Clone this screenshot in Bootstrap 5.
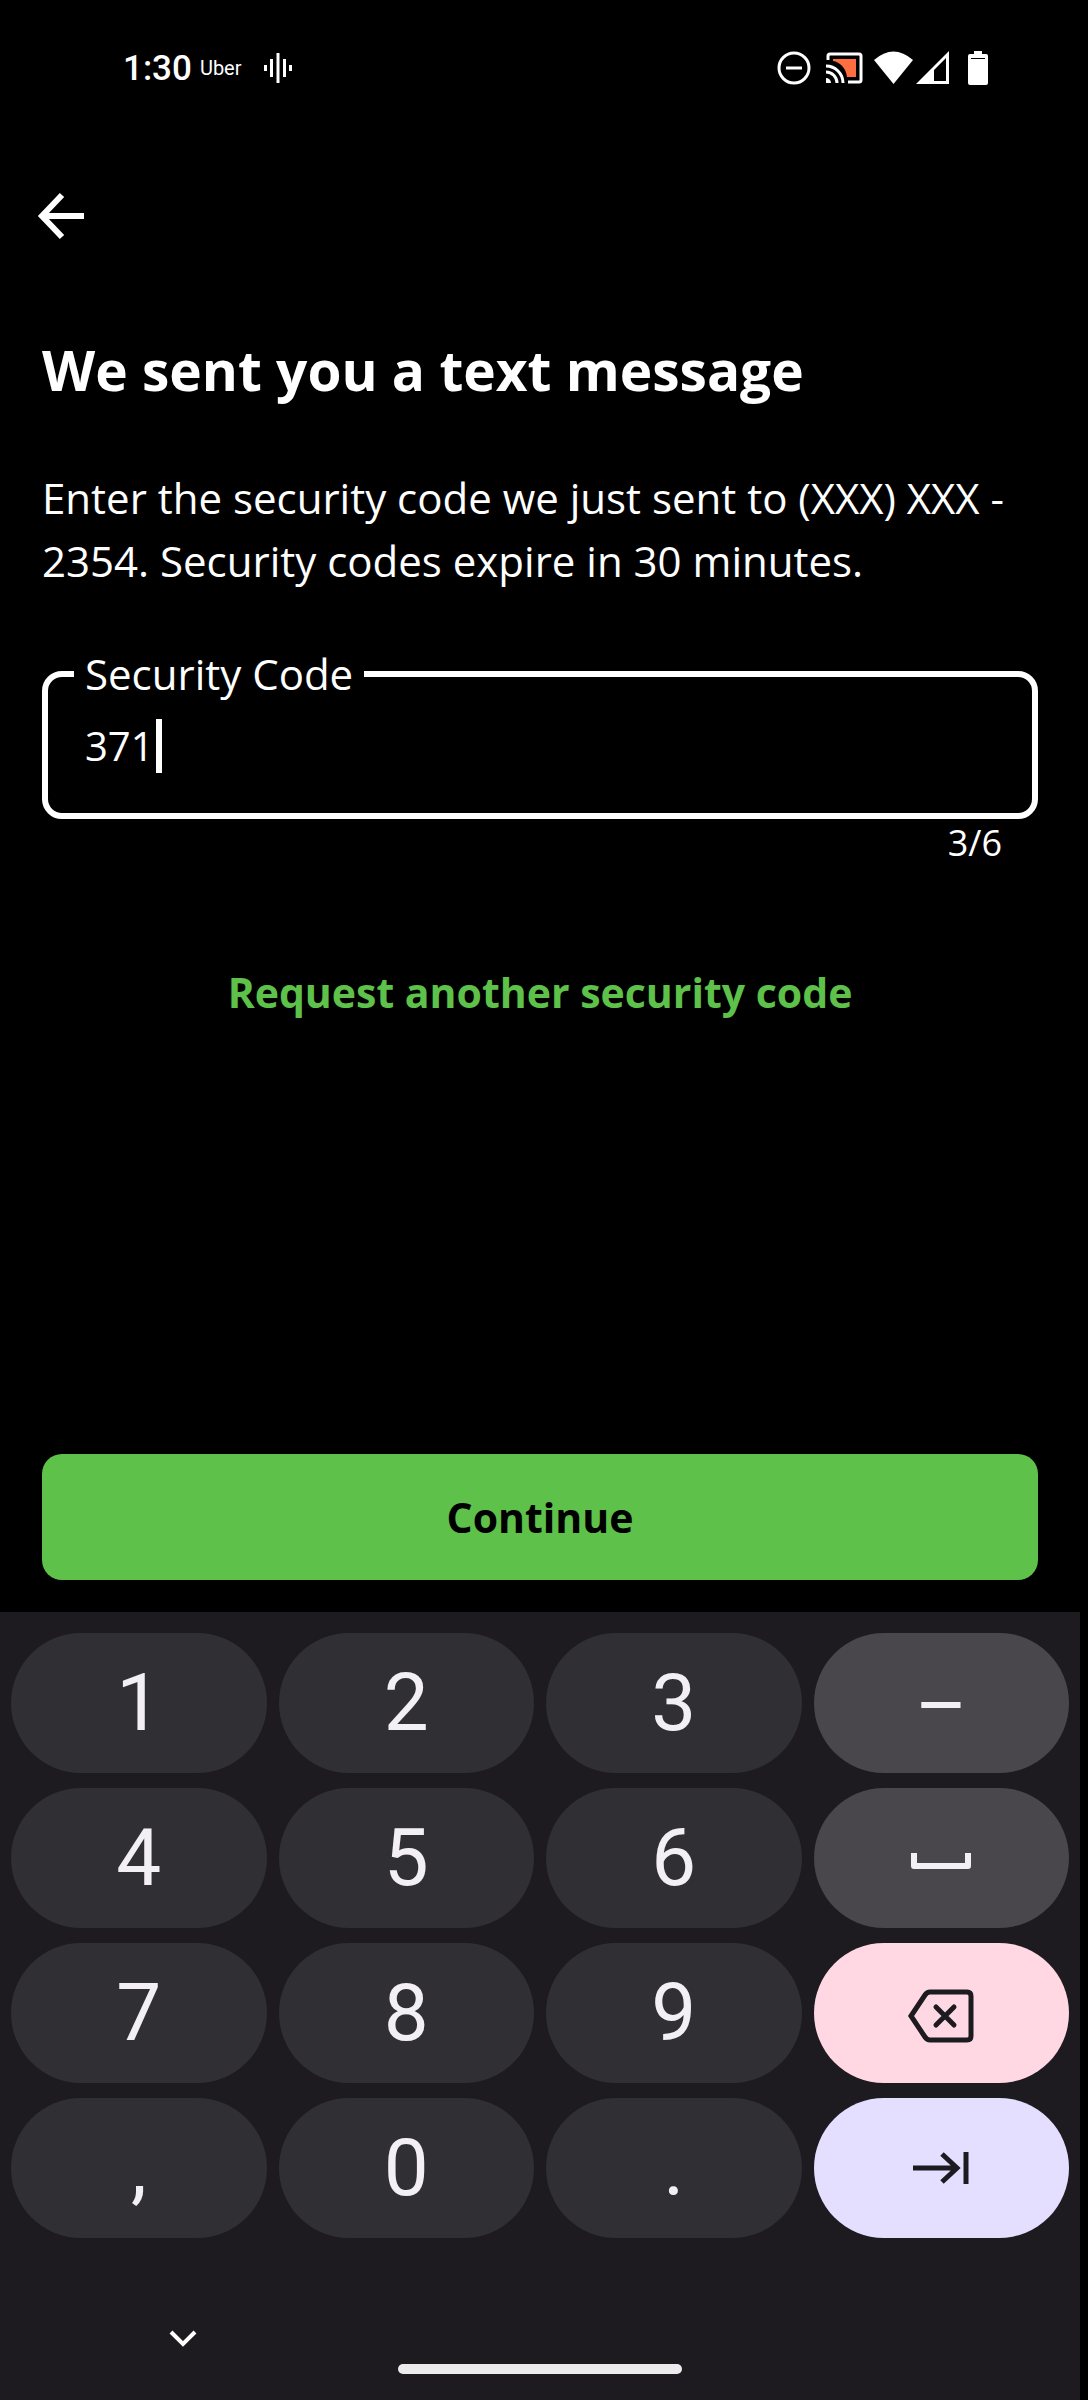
<!DOCTYPE html>
<html lang="en">
<head>
<meta charset="utf-8">
<meta name="viewport" content="width=device-width, initial-scale=1">
<title>Security code</title>
<link href="https://cdn.jsdelivr.net/npm/bootstrap@5.3.0/dist/css/bootstrap.min.css" rel="stylesheet">
<style>
  body { background: #000; color: #fff; font-family: "Open Sans", sans-serif; font-size: 42px; line-height: 63px; padding-right: 8px; }
  svg { display: block; flex: none; }
  .status-bar { height: 136px; padding: 0 92px 0 123px; font-family: Roboto, sans-serif; }
  .clock { font-size: 35px; font-weight: 500; }
  .carrier { font-size: 20px; }
  .voice { margin-left: 22px; }
  .status-icons svg + svg { margin-left: 15px; }
  .status-icons .wifi { margin-left: 11px; }
  .status-icons .signal { margin-left: 3px; }
  .status-icons .battery { margin-left: 18px; }
  .top-bar { height: 160px; padding: 0 34px; }
  .screen-body { padding: 0 42px 32px; }
  .page-title { font-size: 55px; line-height: 72px; font-weight: 700; padding-top: 38px; }
  .intro { padding-top: 60px; }
  .code-field { border: 6px solid #fff; border-radius: 20px; padding: 18px 26px 40px; margin-top: 55px; }
  .code-field legend { font-size: 42px; line-height: 54px; padding: 0 11px; }
  .code-field input { width: 71px; height: 54px; padding: 0; margin-left: 11px; font-size: 40px; line-height: 54px; color: #fff; background: none; border: 0; outline: 0; }
  .caret { width: 6px; height: 54px; background: #fff; }
  .counter { font-size: 36px; line-height: 48px; padding-right: 36px; }
  .resend { color: #5dc14a; font-size: 41px; font-weight: 700; margin-top: 94px; }
  .btn-continue, .btn-continue:hover { background: #5dc14a; color: #000; border: 0; border-radius: 20px; font-size: 41px; line-height: 62px; font-weight: 700; padding: 32px; }
  .keyboard { background: #1d1b20; padding: 21px 11px 0; font-family: Roboto, sans-serif; }
  .keys { grid-template-columns: repeat(4, 1fr); gap: 15px 12px; }
  .key { height: 140px; border: 0; border-radius: 70px; background: #302f34; color: #f2eff5; font-size: 80px; line-height: 80px; padding: 0; }
  .key-mod { background: #49464c; padding-top: 6px; }
  .key-delete { background: #ffd8e4; color: #1d1b20; padding-top: 6px; }
  .key-next { background: #e4deff; color: #1d1b20; }
  .nav-strip { height: 162px; }
  .collapse-btn { margin: 92px 0 0 158px; }
  .home-bar { width: 284px; height: 10px; background: #ececec; margin-bottom: 26px; }
</style>
</head>
<body>
<div class="d-flex flex-column min-vh-100">
  <header class="status-bar d-flex align-items-center justify-content-between">
    <div class="d-flex align-items-center">
      <span class="clock">1:30</span>
      <span class="carrier ms-2">Uber</span>
      <svg class="voice" width="28" height="32" viewBox="0 0 28 32" stroke="#fff" stroke-width="3"><path d="M1.500 13v6M7.500 7v18M14 1v30M20.500 7v18M26.500 13v6"/></svg>
    </div>
    <div class="status-icons d-flex align-items-center">
      <svg width="34" height="34" viewBox="0 0 34 34" fill="none" stroke="#fff" stroke-width="3"><circle cx="17" cy="17" r="15"/><path d="M9 17h16"/></svg>
      <svg width="37" height="32" viewBox="0 0 37 32"><path d="M7 7h23v18h-9C20 16 14 10 7 9z" fill="#ff6e40"/><g fill="none" stroke="#fff" stroke-width="3"><path d="M2 8V4q0-2 2-2h29q2 0 2 2v24q0 2-2 2H22"/><path d="M0 14a17 17 0 0 1 17 17M0 20a11 11 0 0 1 11 11"/></g><path d="M0 26a5 5 0 0 1 5 5H0z" fill="#fff"/></svg>
      <svg class="wifi" width="39" height="34" viewBox="0 0 39 34"><path d="M0 9Q19.500-8 39 9L19.500 33z" fill="#fff"/></svg>
      <svg class="signal" width="34" height="34" viewBox="0 0 34 34"><path d="M0 33 33 0v33zM18 19v11h12V7z" fill="#fff" fill-rule="evenodd"/></svg>
      <svg class="battery" width="20" height="34" viewBox="0 0 20 34"><path d="M6 0h8v3h4q2 0 2 2v27q0 2-2 2H2q-2 0-2-2V5q0-2 2-2h4z" fill="#fff"/><path d="M3 7.500h14" stroke="#000"/></svg>
    </div>
  </header>

  <nav class="top-bar d-flex align-items-center">
    <button type="button" class="btn p-0 border-0" aria-label="Back">
      <svg width="54" height="54" viewBox="0 0 54 54" fill="none" stroke="#fff" stroke-width="6"><path d="M50 27H9M28 6 8 27l20 21"/></svg>
    </button>
  </nav>

  <main class="screen-body d-flex flex-column flex-grow-1">
    <h1 class="page-title m-0">We sent you a text message</h1>
    <p class="intro mb-0">Enter the security code we just sent to (XXX) XXX - 2354. Security codes expire in 30 minutes.</p>
    <fieldset class="code-field">
      <legend class="float-none w-auto m-0"><label class="d-block" for="code">Security Code</label></legend>
      <div class="d-flex align-items-center">
        <input id="code" type="text" inputmode="numeric" maxlength="6" value="371">
        <span class="caret"></span>
      </div>
    </fieldset>
    <div class="counter text-end">3/6</div>
    <a href="#" class="resend text-center text-decoration-none">Request another security code</a>
    <button type="submit" class="btn btn-continue w-100 mt-auto">Continue</button>
  </main>

  <footer class="keyboard">
    <div class="keys d-grid">
      <button type="button" class="btn key">1</button>
      <button type="button" class="btn key">2</button>
      <button type="button" class="btn key">3</button>
      <button type="button" class="btn key key-mod">–</button>
      <button type="button" class="btn key">4</button>
      <button type="button" class="btn key">5</button>
      <button type="button" class="btn key">6</button>
      <button type="button" class="btn key key-mod" aria-label="Space"><svg class="mx-auto" width="60" height="16" viewBox="0 0 60 16" fill="none" stroke="currentColor" stroke-width="6" stroke-linejoin="round"><path d="M3 0v13h54V0"/></svg></button>
      <button type="button" class="btn key">7</button>
      <button type="button" class="btn key">8</button>
      <button type="button" class="btn key">9</button>
      <button type="button" class="btn key key-delete" aria-label="Delete"><svg class="mx-auto" width="68" height="54" viewBox="0 0 68 54" fill="none" stroke="currentColor" stroke-width="5"><path d="M4 27 18 6q2-3 5-3h37q4 0 4 4v40q0 4-4 4H23q-3 0-5-3z"/><path d="m29 18 18 18m0-18L29 36" stroke-linecap="round"/></svg></button>
      <button type="button" class="btn key">,</button>
      <button type="button" class="btn key">0</button>
      <button type="button" class="btn key">.</button>
      <button type="button" class="btn key key-next" aria-label="Next field"><svg class="mx-auto" width="56" height="32" viewBox="0 0 56 32" fill="none" stroke="currentColor" stroke-width="5"><path d="M0 16h44M29 2l15 14-15 14M53 0v32"/></svg></button>
    </div>
    <div class="nav-strip d-flex position-relative">
      <button type="button" class="btn collapse-btn p-0 border-0 align-self-start" aria-label="Hide keyboard"><svg width="28" height="17" viewBox="0 0 28 17" fill="none" stroke="#fff" stroke-width="4"><path d="m2 2 12 12L26 2"/></svg></button>
      <span class="home-bar rounded-pill position-absolute bottom-0 start-50 translate-middle-x"></span>
    </div>
  </footer>
</div>
<script src="https://cdn.jsdelivr.net/npm/bootstrap@5.3.0/dist/js/bootstrap.bundle.min.js"></script>
</body>
</html>
